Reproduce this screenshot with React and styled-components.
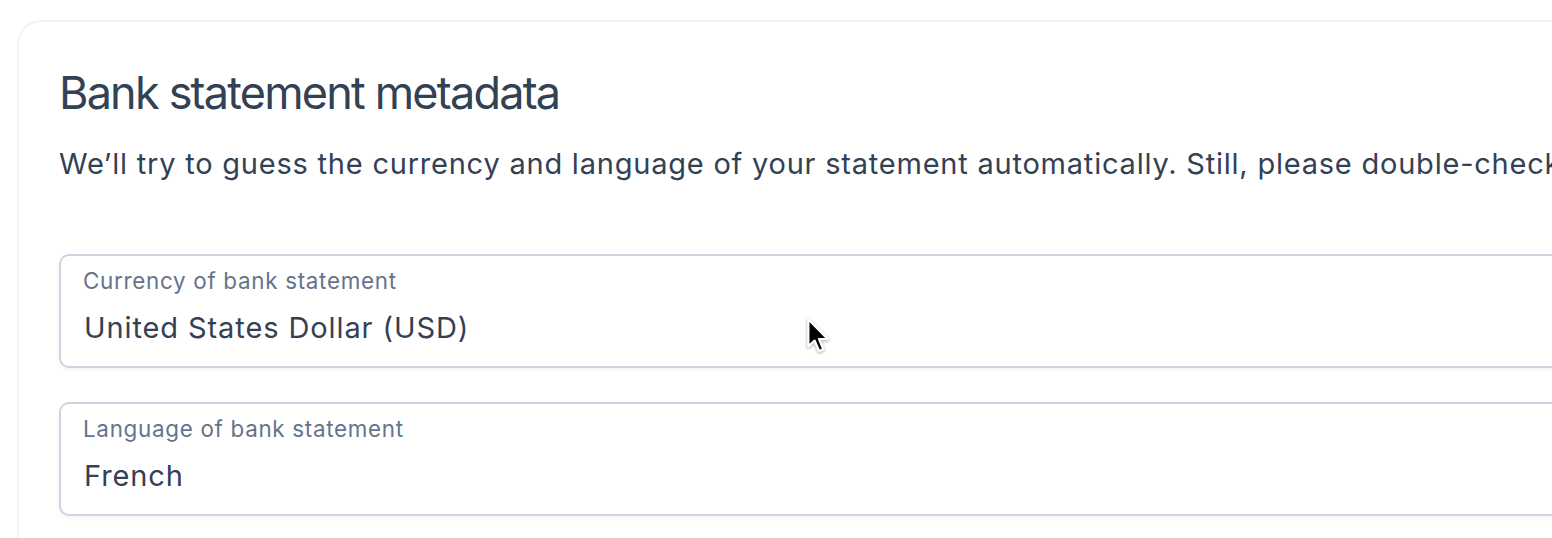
import React from 'react';
import styled, { createGlobalStyle } from 'styled-components';

const GlobalStyle = createGlobalStyle`
  html, body {
    margin: 0;
    padding: 0;
    background: #ffffff;
    overflow: hidden;
  }
  body {
    font-family: Inter, "Noto Sans", sans-serif;
    color: #334155;
  }
`;

const Page = styled.div`
  padding: 20px 0 0 17px;
  width: 2400px;
`;

const Card = styled.section`
  background: #ffffff;
  border: 2px solid #f2f3f5;
  border-right: none;
  border-radius: 24px 0 0 0;
  padding: 43px 40px 40px;
`;

const Title = styled.h2`
  margin: 0;
  font-size: 45px;
  line-height: 56px;
  font-weight: 400;
  letter-spacing: -1.8px;
  color: #334155;
`;

const Lead = styled.p`
  margin: 23px 0 0;
  font-size: 29px;
  line-height: 40px;
  letter-spacing: 0.78px;
  color: #334155;
  white-space: nowrap;
`;

const Fields = styled.div`
  display: flex;
  flex-direction: column;
  gap: 34px;
  margin-top: 70px;
`;

const Field = styled.label`
  display: flex;
  flex-direction: column;
  height: 114px;
  box-sizing: border-box;
  padding: 10px 22px 0;
  border: 2px solid #cbd5e1;
  border-right: none;
  border-radius: 10px 0 0 10px;
  box-shadow: 0 2px 4px rgba(15, 23, 42, 0.05);
`;

const FieldLabel = styled.span`
  font-size: 22.4px;
  line-height: 30px;
  letter-spacing: 0.7px;
  color: #64748b;
`;

const FieldValue = styled.span`
  margin-top: 12px;
  padding-left: 1px;
  font-size: 29px;
  line-height: 40px;
  letter-spacing: 0.9px;
  color: #334155;
`;

const Cursor = styled.svg`
  position: absolute;
  left: 806px;
  top: 317px;
  width: 25px;
  height: 37px;
  pointer-events: none;
  filter: drop-shadow(0 1px 1.5px rgba(0, 0, 0, 0.35));
`;

const fields = [
  { label: 'Currency of bank statement', value: 'United States Dollar (USD)' },
  { label: 'Language of bank statement', value: 'French' },
];

const App = () => (
  <>
    <GlobalStyle />
    <Page>
      <Card>
        <Title>Bank statement metadata</Title>
        <Lead>
          We’ll try to guess the currency and language of your statement automatically. Still,
          please double-check the values below.
        </Lead>
        <Fields>
          {fields.map((f) => (
            <Field key={f.label}>
              <FieldLabel>{f.label}</FieldLabel>
              <FieldValue>{f.value}</FieldValue>
            </Field>
          ))}
        </Fields>
      </Card>
    </Page>
    <Cursor viewBox="0 0 13 19">
      <path
        d="M1.2 1 L1.2 15.2 L4.5 12.2 L6.8 17.6 L9 16.7 L6.8 11.4 L11.4 11.4 Z"
        fill="#000"
        stroke="#fff"
        strokeWidth="1.2"
        strokeLinejoin="round"
      />
    </Cursor>
  </>
);

export default App;
